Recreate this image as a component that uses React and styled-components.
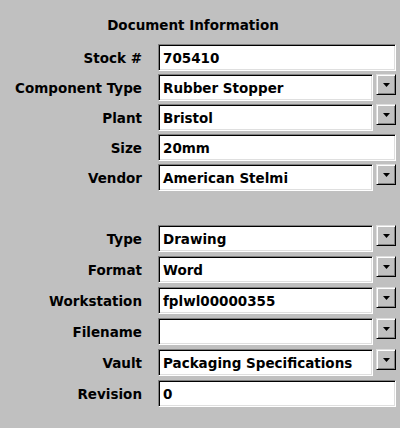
import React from "react";
import styled, { createGlobalStyle } from "styled-components";

const GlobalStyle = createGlobalStyle`
  html, body {
    margin: 0;
    padding: 0;
    background: #c0c0c0;
  }
  body {
    font-family: "DejaVu Sans", "Liberation Sans", sans-serif;
  }
`;

const upperFields = [
  { label: "Stock #", value: "705410" },
  { label: "Component Type", value: "Rubber Stopper", combo: true },
  { label: "Plant", value: "Bristol", combo: true },
  { label: "Size", value: "20mm" },
  { label: "Vendor", value: "American Stelmi", combo: true },
];

const lowerFields = [
  { label: "Type", value: "Drawing", combo: true },
  { label: "Format", value: "Word", combo: true },
  { label: "Workstation", value: "fplwl00000355", combo: true },
  { label: "Filename", value: "", combo: true },
  { label: "Vault", value: "Packaging Specifications", combo: true },
  { label: "Revision", value: "0" },
];

const Field = ({ label, value, combo }) => (
  <>
    <Label>{label}</Label>
    <Control>
      <Input $combo={combo}>{value}</Input>
      {combo && (
        <DropButton>
          <svg width="7" height="4" viewBox="0 0 7 4">
            <path d="M0 0h7L3.5 4z" fill="#000" />
          </svg>
        </DropButton>
      )}
    </Control>
  </>
);

const App = () => {
  return (
    <Page>
      <GlobalStyle />
      <Title>Document Information</Title>
      <Group $gap={3}>
        {upperFields.map((f) => (
          <Field key={f.label} {...f} />
        ))}
      </Group>
      <Group $gap={4} $top={34}>
        {lowerFields.map((f) => (
          <Field key={f.label} {...f} />
        ))}
      </Group>
    </Page>
  );
};

const Page = styled.div`
  width: 400px;
  height: 428px;
  background: #c0c0c0;
  color: #000;
  font-size: 13.5px;
  font-weight: bold;
  padding-top: 17px;
  box-sizing: border-box;
`;

const Title = styled.div`
  width: 386px;
  text-align: center;
  line-height: 16px;
  margin-bottom: 11px;
`;

const Group = styled.div`
  display: grid;
  grid-template-columns: 142px 238px;
  column-gap: 16px;
  row-gap: ${(p) => p.$gap}px;
  margin-top: ${(p) => p.$top || 0}px;
`;

const Label = styled.div`
  height: 27px;
  display: flex;
  align-items: center;
  justify-content: flex-end;
  white-space: nowrap;
`;

const Control = styled.div`
  display: flex;
  align-items: flex-start;
  gap: 3px;
`;

const Input = styled.div`
  box-sizing: border-box;
  height: 27px;
  width: ${(p) => (p.$combo ? "215px" : "238px")};
  background: #fff;
  border: 1px solid;
  border-color: #808080 #fff #fff #808080;
  box-shadow: inset 1px 1px #000, inset -1px -1px #dfdfdf;
  padding: 0 3px 0 4px;
  display: flex;
  align-items: center;
  white-space: nowrap;
  overflow: hidden;
`;

const DropButton = styled.div`
  box-sizing: border-box;
  width: 20px;
  height: 21px;
  background: #c0c0c0;
  border: 1px solid;
  border-color: #dfdfdf #000 #000 #dfdfdf;
  box-shadow: inset 1px 1px #fff, inset -1px -1px #808080;
  display: flex;
  align-items: center;
  justify-content: center;
  padding-top: 1px;
`;

export default App;
